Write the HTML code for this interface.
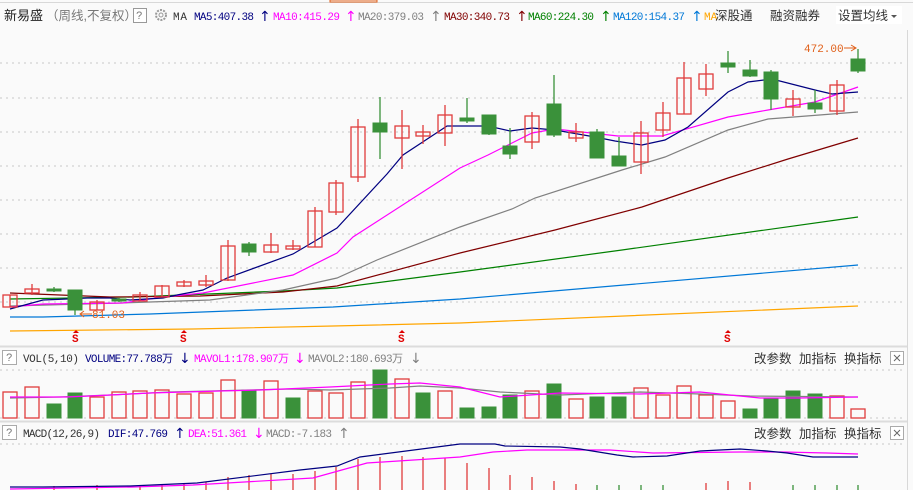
<!DOCTYPE html>
<html><head><meta charset="utf-8"><style>
html,body{margin:0;padding:0;background:#fafafa;}
svg{display:block;}
text{font-family:"Liberation Mono","Noto Sans CJK SC",monospace;font-size:11px;}
.cj{font-family:"Liberation Sans","Noto Sans CJK SC",sans-serif;font-size:12.5px;fill:#333;}
.ar{font-family:"DejaVu Sans",sans-serif;font-size:14px;}
.r rect{fill:none;stroke:#e03c3c;stroke-width:1.3;}
.r line{stroke:#e03c3c;stroke-width:1.3;}
.g rect{fill:#3a913a;stroke:#3a913a;}
.g line{stroke:#3a913a;stroke-width:1.3;}
.grid line{stroke:#c8c8c8;stroke-dasharray:2 4;stroke-width:1;}
polyline{fill:none;stroke-width:1.2;}
</style></head><body>
<svg width="913" height="490" viewBox="0 0 913 490" xmlns="http://www.w3.org/2000/svg">
<rect width="913" height="490" fill="#fafafa"/>
<line x1="0" y1="2.5" x2="913" y2="2.5" stroke="#d8d8d8"/>
<rect x="330" y="0" width="47" height="2" fill="none" stroke="#e0601a"/>
<line x1="907.5" y1="30" x2="907.5" y2="490" stroke="#d8d8d8"/>
<!-- header -->
<text x="4" y="20" class="cj" style="font-size:13px;fill:#222">新易盛</text>
<text x="46" y="20" class="cj" style="fill:#777">（周线,不复权）</text>
<rect x="133.5" y="8.5" width="13" height="14" fill="#fff" stroke="#999"/>
<text x="136" y="19" style="fill:#777">?</text>
<circle cx="161" cy="15" r="5" fill="none" stroke="#999" stroke-width="2" stroke-dasharray="2 1.2"/>
<circle cx="161" cy="15" r="2" fill="none" stroke="#999"/>
<text x="173" y="20" textLength="14" style="fill:#333">MA</text>
<text x="194" y="20" textLength="60" style="fill:#000080">MA5:407.38</text>
<text x="259" y="21" class="ar" style="fill:#000080">↑</text>
<text x="273" y="20" textLength="67" style="fill:#ff00ff">MA10:415.29</text>
<text x="345" y="21" class="ar" style="fill:#ff00ff">↑</text>
<text x="358" y="20" textLength="66" style="fill:#808080">MA20:379.03</text>
<text x="430" y="21" class="ar" style="fill:#808080">↑</text>
<text x="444" y="20" textLength="66" style="fill:#800000">MA30:340.73</text>
<text x="516" y="21" class="ar" style="fill:#800000">↑</text>
<text x="528" y="20" textLength="66" style="fill:#008000">MA60:224.30</text>
<text x="600" y="21" class="ar" style="fill:#008000">↑</text>
<text x="613" y="20" textLength="72" style="fill:#0078d7">MA120:154.37</text>
<text x="691" y="21" class="ar" style="fill:#0078d7">↑</text>
<text x="704" y="20" style="fill:#ffa500">MA</text>
<text x="715" y="20" class="cj">深股通</text>
<text x="770" y="20" class="cj">融资融券</text>
<rect x="836" y="6" width="66" height="18" fill="#fff"/>
<text x="838" y="20" class="cj">设置均线</text>
<path d="M891 15 h6 l-3 3z" fill="#555"/>
<!-- grid main -->
<g class="grid">
<line x1="0" y1="63" x2="905" y2="63"/><line x1="0" y1="98" x2="905" y2="98"/><line x1="0" y1="132" x2="905" y2="132"/><line x1="0" y1="166" x2="905" y2="166"/><line x1="0" y1="200" x2="905" y2="200"/><line x1="0" y1="234" x2="905" y2="234"/><line x1="0" y1="268" x2="905" y2="268"/><line x1="0" y1="302" x2="905" y2="302"/>
</g>
<!-- MAs -->
<polyline stroke="#ffa500" points="10,331 193,329 333,326 460,323 858,306"/>
<polyline stroke="#0078d7" points="10,317 43,317 150,314 333,307 460,299 858,265"/>
<polyline stroke="#008000" points="10,299 133,297 283,291 337,288 460,272 622,250 858,217"/>
<polyline stroke="#800000" points="10,293 110,297 200,296 283,292 337,286 460,253 555,230 642,207 728,178 788,159 858,138"/>
<polyline stroke="#808080" points="10,306 120,303 210,300 283,290 337,278 377,260 460,227 512,209 535,198 622,170 665,157 728,130 768,119 858,112"/>
<polyline stroke="#ff00ff" points="10,307 43,304 123,303 163,297 203,293 293,275 337,253 353,237 460,168 488,155 532,133 555,129 618,136 662,136 728,117 768,110 815,102 858,87"/>
<polyline stroke="#000080" points="10,309 43,300 67,299 87,298 110,298 130,300 163,298 177,295 203,290 227,278 293,254 337,228 387,174 403,155 447,126 488,126 510,131 532,128 555,130 595,137 615,141 642,145 665,140 688,127 728,92 748,82 772,79 815,90 832,94 858,92"/>
<!-- candles -->
<g class="r"><line x1="10" y1="295" x2="10" y2="307"/><rect x="3" y="295" width="14" height="12"/></g>
<g class="r"><line x1="32" y1="284" x2="32" y2="295"/><rect x="25" y="289" width="14" height="4"/></g>
<g class="g"><line x1="54" y1="287" x2="54" y2="292"/><rect x="47" y="289" width="14" height="2"/></g>
<g class="g"><line x1="75" y1="290" x2="75" y2="315"/><rect x="68" y="290" width="14" height="20"/></g>
<g class="r"><line x1="97" y1="300" x2="97" y2="310"/><rect x="90" y="302" width="14" height="8"/></g>
<g class="g"><line x1="119" y1="298" x2="119" y2="302"/><rect x="112" y="299" width="14" height="2"/></g>
<g class="r"><line x1="140" y1="292" x2="140" y2="301"/><rect x="133" y="295" width="14" height="6"/></g>
<g class="r"><line x1="162" y1="285" x2="162" y2="297"/><rect x="155" y="286" width="14" height="11"/></g>
<g class="r"><line x1="184" y1="280" x2="184" y2="287"/><rect x="177" y="282" width="14" height="4"/></g>
<g class="r"><line x1="206" y1="275" x2="206" y2="287"/><rect x="199" y="281" width="14" height="4"/></g>
<g class="r"><line x1="228" y1="240" x2="228" y2="281"/><rect x="221" y="246" width="14" height="34"/></g>
<g class="g"><line x1="249" y1="242" x2="249" y2="256"/><rect x="242" y="244" width="14" height="8"/></g>
<g class="r"><line x1="271" y1="233" x2="271" y2="253"/><rect x="264" y="245" width="14" height="7"/></g>
<g class="r"><line x1="293" y1="240" x2="293" y2="250"/><rect x="286" y="246" width="14" height="3"/></g>
<g class="r"><line x1="315" y1="207" x2="315" y2="247"/><rect x="308" y="211" width="14" height="36"/></g>
<g class="r"><line x1="336" y1="180" x2="336" y2="215"/><rect x="329" y="183" width="14" height="29"/></g>
<g class="r"><line x1="358" y1="119" x2="358" y2="182"/><rect x="351" y="127" width="14" height="50"/></g>
<g class="g"><line x1="380" y1="97" x2="380" y2="159"/><rect x="373" y="123" width="14" height="9"/></g>
<g class="r"><line x1="402" y1="110" x2="402" y2="169"/><rect x="395" y="126" width="14" height="12"/></g>
<g class="r"><line x1="423" y1="125" x2="423" y2="144"/><rect x="416" y="132" width="14" height="4"/></g>
<g class="r"><line x1="445" y1="105" x2="445" y2="146"/><rect x="438" y="115" width="14" height="18"/></g>
<g class="g"><line x1="467" y1="98" x2="467" y2="123"/><rect x="460" y="118" width="14" height="3"/></g>
<g class="g"><line x1="489" y1="115" x2="489" y2="135"/><rect x="482" y="115" width="14" height="19"/></g>
<g class="g"><line x1="510" y1="128" x2="510" y2="159"/><rect x="503" y="146" width="14" height="8"/></g>
<g class="r"><line x1="532" y1="112" x2="532" y2="149"/><rect x="525" y="116" width="14" height="26"/></g>
<g class="g"><line x1="554" y1="75" x2="554" y2="137"/><rect x="547" y="104" width="14" height="31"/></g>
<g class="r"><line x1="576" y1="123" x2="576" y2="142"/><rect x="569" y="132" width="14" height="6"/></g>
<g class="g"><line x1="597" y1="129" x2="597" y2="158"/><rect x="590" y="132" width="14" height="26"/></g>
<g class="g"><line x1="619" y1="137" x2="619" y2="166"/><rect x="612" y="156" width="14" height="10"/></g>
<g class="r"><line x1="641" y1="121" x2="641" y2="174"/><rect x="634" y="133" width="14" height="29"/></g>
<g class="r"><line x1="663" y1="102" x2="663" y2="137"/><rect x="656" y="113" width="14" height="17"/></g>
<g class="r"><line x1="684" y1="62" x2="684" y2="114"/><rect x="677" y="78" width="14" height="36"/></g>
<g class="r"><line x1="706" y1="64" x2="706" y2="96"/><rect x="699" y="74" width="14" height="15"/></g>
<g class="g"><line x1="728" y1="51" x2="728" y2="73"/><rect x="721" y="63" width="14" height="4"/></g>
<g class="g"><line x1="750" y1="60" x2="750" y2="77"/><rect x="743" y="70" width="14" height="6"/></g>
<g class="g"><line x1="771" y1="70" x2="771" y2="110"/><rect x="764" y="72" width="14" height="27"/></g>
<g class="r"><line x1="793" y1="90" x2="793" y2="116"/><rect x="786" y="99" width="14" height="8"/></g>
<g class="g"><line x1="815" y1="90" x2="815" y2="113"/><rect x="808" y="103" width="14" height="6"/></g>
<g class="r"><line x1="837" y1="80" x2="837" y2="115"/><rect x="830" y="85" width="14" height="26"/></g>
<g class="g"><line x1="858" y1="49" x2="858" y2="73"/><rect x="851" y="59" width="14" height="12"/></g>
<text x="804" y="52" style="fill:#e0601a">472.00</text>
<path d="M844 48 h12 M851 45 l5 3 -5 3" stroke="#e0601a" fill="none"/>
<path d="M80 314 h12 M84 311 l-4 3 4 3" stroke="#e0601a" fill="none"/>
<text x="92" y="318" style="fill:#e0601a">81.03</text>
<g style="fill:#e00000;font-weight:bold;font-size:11px">
<text x="72" y="342">S</text><text x="180" y="342">S</text><text x="398" y="342">S</text><text x="724" y="342">S</text></g>
<g fill="#e00000"><path d="M76 330 l-3 3 h6z"/><path d="M184 330 l-3 3 h6z"/><path d="M402 330 l-3 3 h6z"/><path d="M728 330 l-3 3 h6z"/></g>
<!-- VOL panel -->
<line x1="0" y1="346.5" x2="907" y2="346.5" stroke="#dcdcdc" stroke-width="2"/>
<rect x="2.5" y="350.5" width="14" height="14" fill="#fff" stroke="#aaa"/>
<text x="6" y="361" style="fill:#777">?</text>
<text x="23" y="362" textLength="56" style="fill:#333">VOL(5,10)</text>
<text x="85" y="362" textLength="88" style="fill:#000080">VOLUME:77.788万</text>
<text x="179" y="363" class="ar" style="fill:#000080">↓</text>
<text x="194" y="362" textLength="95" style="fill:#ff00ff">MAVOL1:178.907万</text>
<text x="294" y="363" class="ar" style="fill:#ff00ff">↓</text>
<text x="308" y="362" textLength="95" style="fill:#808080">MAVOL2:180.693万</text>
<text x="410" y="363" class="ar" style="fill:#808080">↓</text>
<text x="754" y="363" class="cj">改参数</text><text x="799" y="363" class="cj">加指标</text><text x="844" y="363" class="cj">换指标</text>
<rect x="890.5" y="351.5" width="13" height="13" fill="#fff" stroke="#aaa"/>
<path d="M894 355 l6 6 M900 355 l-6 6" stroke="#666"/>
<g class="grid"><line x1="0" y1="370" x2="905" y2="370"/><line x1="0" y1="418" x2="905" y2="418"/></g>
<g class="r">
<rect x="3" y="392" width="14" height="26"/><rect x="25" y="387" width="14" height="31"/><rect x="90" y="397" width="14" height="21"/><rect x="112" y="392" width="14" height="26"/><rect x="133" y="391" width="14" height="27"/><rect x="155" y="390" width="14" height="28"/><rect x="177" y="394" width="14" height="24"/><rect x="199" y="393" width="14" height="25"/><rect x="221" y="380" width="14" height="38"/><rect x="264" y="381" width="14" height="37"/><rect x="308" y="391" width="14" height="27"/><rect x="329" y="393" width="14" height="25"/><rect x="351" y="382" width="14" height="36"/><rect x="395" y="379" width="14" height="39"/><rect x="438" y="391" width="14" height="27"/><rect x="525" y="391" width="14" height="27"/><rect x="569" y="399" width="14" height="19"/><rect x="634" y="388" width="14" height="30"/><rect x="656" y="395" width="14" height="23"/><rect x="677" y="386" width="14" height="32"/><rect x="699" y="395" width="14" height="23"/><rect x="721" y="401" width="14" height="17"/><rect x="830" y="396" width="14" height="22"/><rect x="851" y="409" width="14" height="9"/>
</g>
<g class="g">
<rect x="47" y="404" width="14" height="14"/><rect x="68" y="393" width="14" height="25"/><rect x="242" y="390" width="14" height="28"/><rect x="286" y="398" width="14" height="20"/><rect x="373" y="370" width="14" height="48"/><rect x="416" y="393" width="14" height="25"/><rect x="460" y="408" width="14" height="10"/><rect x="482" y="407" width="14" height="11"/><rect x="503" y="395" width="14" height="23"/><rect x="547" y="384" width="14" height="34"/><rect x="590" y="397" width="14" height="21"/><rect x="612" y="397" width="14" height="21"/><rect x="743" y="409" width="14" height="9"/><rect x="764" y="399" width="14" height="19"/><rect x="786" y="391" width="14" height="27"/><rect x="808" y="394" width="14" height="24"/>
</g>
<polyline stroke="#808080" points="10,398 60,397 110,395 170,392 250,390 290,389 330,390 390,388 420,386 460,388 500,392 560,395 640,392 700,394 750,396 858,397"/>
<polyline stroke="#ff00ff" points="10,397 67,397 90,396 150,393 220,391 260,390 330,387 390,384 420,383 460,387 500,397 560,393 640,394 700,392 760,398 800,398 858,397"/>
<!-- MACD panel -->
<line x1="0" y1="421.5" x2="907" y2="421.5" stroke="#dcdcdc" stroke-width="2"/>
<rect x="2.5" y="425.5" width="14" height="14" fill="#fff" stroke="#aaa"/>
<text x="6" y="436" style="fill:#777">?</text>
<text x="23" y="437" textLength="77" style="fill:#333">MACD(12,26,9)</text>
<text x="108" y="437" textLength="60" style="fill:#000080">DIF:47.769</text>
<text x="174" y="438" class="ar" style="fill:#000080">↑</text>
<text x="188" y="437" textLength="59" style="fill:#ff00ff">DEA:51.361</text>
<text x="253" y="438" class="ar" style="fill:#ff00ff">↓</text>
<text x="266" y="437" textLength="66" style="fill:#808080">MACD:-7.183</text>
<text x="338" y="438" class="ar" style="fill:#808080">↑</text>
<text x="754" y="438" class="cj">改参数</text><text x="799" y="438" class="cj">加指标</text><text x="844" y="438" class="cj">换指标</text>
<rect x="890.5" y="426.5" width="13" height="13" fill="#fff" stroke="#aaa"/>
<path d="M894 430 l6 6 M900 430 l-6 6" stroke="#666"/>
<g class="grid"><line x1="0" y1="444" x2="905" y2="444"/></g>
<g stroke="#e03c3c" stroke-width="1.3">
<line x1="54" y1="486" x2="54" y2="490"/><line x1="97" y1="485" x2="97" y2="490"/><line x1="140" y1="485" x2="140" y2="490"/><line x1="162" y1="484" x2="162" y2="490"/><line x1="184" y1="484" x2="184" y2="490"/><line x1="206" y1="482" x2="206" y2="490"/>
<line x1="228" y1="477" x2="228" y2="490"/><line x1="249" y1="475" x2="249" y2="490"/><line x1="271" y1="474" x2="271" y2="490"/><line x1="293" y1="474" x2="293" y2="490"/><line x1="315" y1="471" x2="315" y2="490"/><line x1="336" y1="467" x2="336" y2="490"/><line x1="358" y1="459" x2="358" y2="490"/><line x1="380" y1="457" x2="380" y2="490"/><line x1="402" y1="456" x2="402" y2="490"/><line x1="423" y1="457" x2="423" y2="490"/><line x1="445" y1="458" x2="445" y2="490"/><line x1="467" y1="463" x2="467" y2="490"/><line x1="489" y1="468" x2="489" y2="490"/><line x1="510" y1="475" x2="510" y2="490"/><line x1="532" y1="477" x2="532" y2="490"/><line x1="554" y1="481" x2="554" y2="490"/><line x1="576" y1="484" x2="576" y2="490"/><line x1="706" y1="483" x2="706" y2="490"/><line x1="728" y1="481" x2="728" y2="490"/><line x1="750" y1="482" x2="750" y2="490"/>
</g>
<g stroke="#3a913a" stroke-width="1.3">
<line x1="597" y1="485" x2="597" y2="490"/><line x1="619" y1="485" x2="619" y2="490"/><line x1="641" y1="485" x2="641" y2="490"/><line x1="663" y1="485" x2="663" y2="490"/><line x1="793" y1="485" x2="793" y2="490"/><line x1="815" y1="485" x2="815" y2="490"/><line x1="837" y1="485" x2="837" y2="490"/><line x1="858" y1="485" x2="858" y2="490"/>
</g>
<polyline stroke="#ff00ff" points="10,489 133,487 193,485 313,478 367,463 460,457 493,452 527,450 610,450 653,453 740,452 783,452 827,453 858,454"/>
<polyline stroke="#000080" points="10,487 43,487 130,486 197,483 300,470 337,466 360,457 460,444 495,444 505,446 560,447 580,449 617,455 633,457 667,456 700,451 740,449 767,451 787,453 813,457 858,457"/>
</svg>
</body></html>
